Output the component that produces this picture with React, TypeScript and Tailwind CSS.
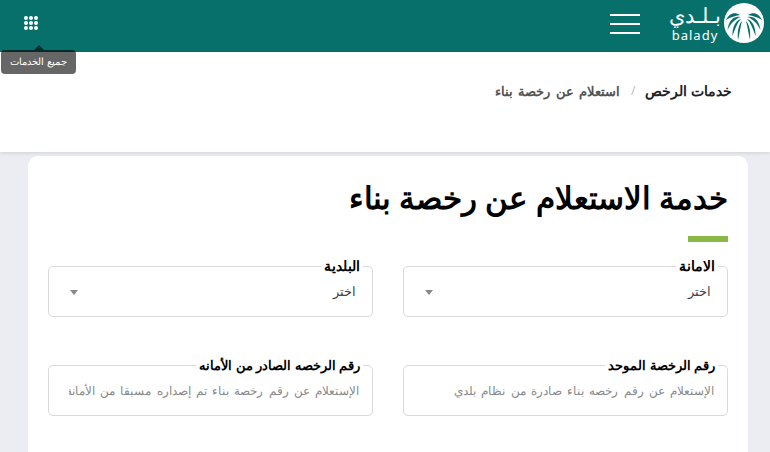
const FONT = "font-['Noto_Sans',sans-serif]";

function Palm() {
  return (
    <svg width="40" height="40" viewBox="0 0 40 40" className="shrink-0">
      <circle cx="20" cy="20" r="20" fill="#fff" />
      <g fill="#08706b">
        <path d="M16 12C10 8 5 11 2 17 7 14 11 13 16 12Z" />
        <path d="M16.500 14C10 13 5 17 3.500 27 7 20 11 16 16.500 14Z" />
        <path d="M17 16C12 17 8 24 8.500 33 11 26 13 20 17 16Z" />
        <path d="M18 18C15 21 13 28 14 37 15.500 30 16.500 24 18 18Z" />
        <path d="M24 12C30 8 35 11 38 17 33 14 29 13 24 12Z" />
        <path d="M23.500 14C30 13 35 17 36.500 27 33 20 29 16 23.500 14Z" />
        <path d="M23 16C28 17 32 24 31.500 33 29 26 27 20 23 16Z" />
        <path d="M22 18C25 21 27 28 26 37 24.500 30 23.500 24 22 18Z" />
      </g>
    </svg>
  );
}

function Field({ label, small, children }: { label: string; small?: boolean; children: React.ReactNode }) {
  return (
    <div className="relative h-[51px] rounded-[5px] border border-[#d9d9d9] bg-white pr-[13px] pl-[20px]">
      <span
        className={`absolute -top-[9px] right-[9px] bg-white px-[3px] leading-[16px] font-bold text-black ${small ? "text-[13px]" : "text-[14px]"}`}
      >
        {label}
      </span>
      {children}
    </div>
  );
}

function SelectField({ label }: { label: string }) {
  return (
    <Field label={label}>
      <div className="flex h-full items-center justify-between pt-[2px] pr-[3px] pl-[1px]">
        <span className="text-[12.500px] font-medium text-[#444]">اختر</span>
        <span className="h-0 w-0 border-x-[4px] border-t-[5px] border-x-transparent border-t-[#888]" />
      </div>
    </Field>
  );
}

function TextField({ label, placeholder }: { label: string; placeholder: string }) {
  return (
    <Field label={label} small>
      <div className="flex h-full items-center overflow-hidden pt-[1px]">
        <span className="whitespace-nowrap text-[12.400px] text-[#8a8a8a] [word-spacing:2px]">{placeholder}</span>
      </div>
    </Field>
  );
}

export default function App() {
  return (
    <div dir="rtl" className={`${FONT} relative h-[452px] w-[770px] overflow-hidden bg-[#ebedf2]`}>
      <header className="flex h-[52px] items-center justify-between bg-[#08706b] pr-[6px] pl-[24px]">
        <div className="flex items-center">
          <div className="flex items-start gap-[4px] pb-[6px]">
            <Palm />
            <div dir="ltr" className="flex w-[50px] flex-col items-center pt-[2px] text-white">
              <span className="text-[21px] leading-[20px]">بـلـدي</span>
              <span className="mt-[4px] text-[13px] leading-[12px] tracking-[1px]">balady</span>
            </div>
          </div>
          <div className="mr-[30px] mb-[4px] flex w-[30px] flex-col gap-[7px]">
            <span className="h-[2px] bg-white" />
            <span className="h-[2px] bg-white" />
            <span className="h-[2px] bg-white" />
          </div>
        </div>
        <div className="mb-[6px] grid grid-cols-3 gap-[1px]">
          {Array.from({ length: 9 }).map((_, i) => (
            <span key={i} className="h-[4px] w-[4px] rounded-full bg-white" />
          ))}
        </div>
      </header>

      <div className="absolute top-[45px] left-[1px] flex flex-col items-center">
        <span className="h-0 w-0 self-center border-x-[5px] border-b-[5px] border-x-transparent border-b-black/60" />
        <div className="flex h-[24px] w-[75px] items-center justify-center rounded-[4px] bg-black/60 text-[10.400px] text-white">
          جميع الخدمات
        </div>
      </div>

      <nav className="flex h-[100px] items-start bg-white pt-[29px] pr-[38px] shadow-[0_1px_4px_rgba(0,0,0,0.12)]">
        <span className="text-[13.700px] leading-[20px] font-bold text-[#222]">خدمات الرخص</span>
        <span className="mr-[10px] ml-[11px] text-[12px] leading-[20px] text-[#bbb]">/</span>
        <span className="text-[13.300px] leading-[20px] font-semibold text-[#555] [word-spacing:2px]">استعلام عن رخصة بناء</span>
      </nav>

      <main className="mt-[4px] mr-[22px] ml-[28px] h-[320px] rounded-t-[10px] bg-white px-[20px] pt-[22px]">
        <h1 className="text-[31px] leading-[38px] font-bold text-black">خدمة الاستعلام عن رخصة بناء</h1>
        <div className="mt-[20px] h-[6px] w-[40px] bg-[#8ab847]" />
        <div className="mt-[24px] grid grid-cols-2 gap-x-[30px] gap-y-[48px]">
          <SelectField label="الامانة" />
          <SelectField label="البلدية" />
          <TextField label="رقم الرخصة الموحد" placeholder="الإستعلام عن رقم رخصه بناء صادرة من نظام بلدي" />
          <TextField label="رقم الرخصه الصادر من الأمانه" placeholder="الإستعلام عن رقم رخصة بناء تم إصداره مسبقا من الأمانة" />
        </div>
      </main>
    </div>
  );
}
